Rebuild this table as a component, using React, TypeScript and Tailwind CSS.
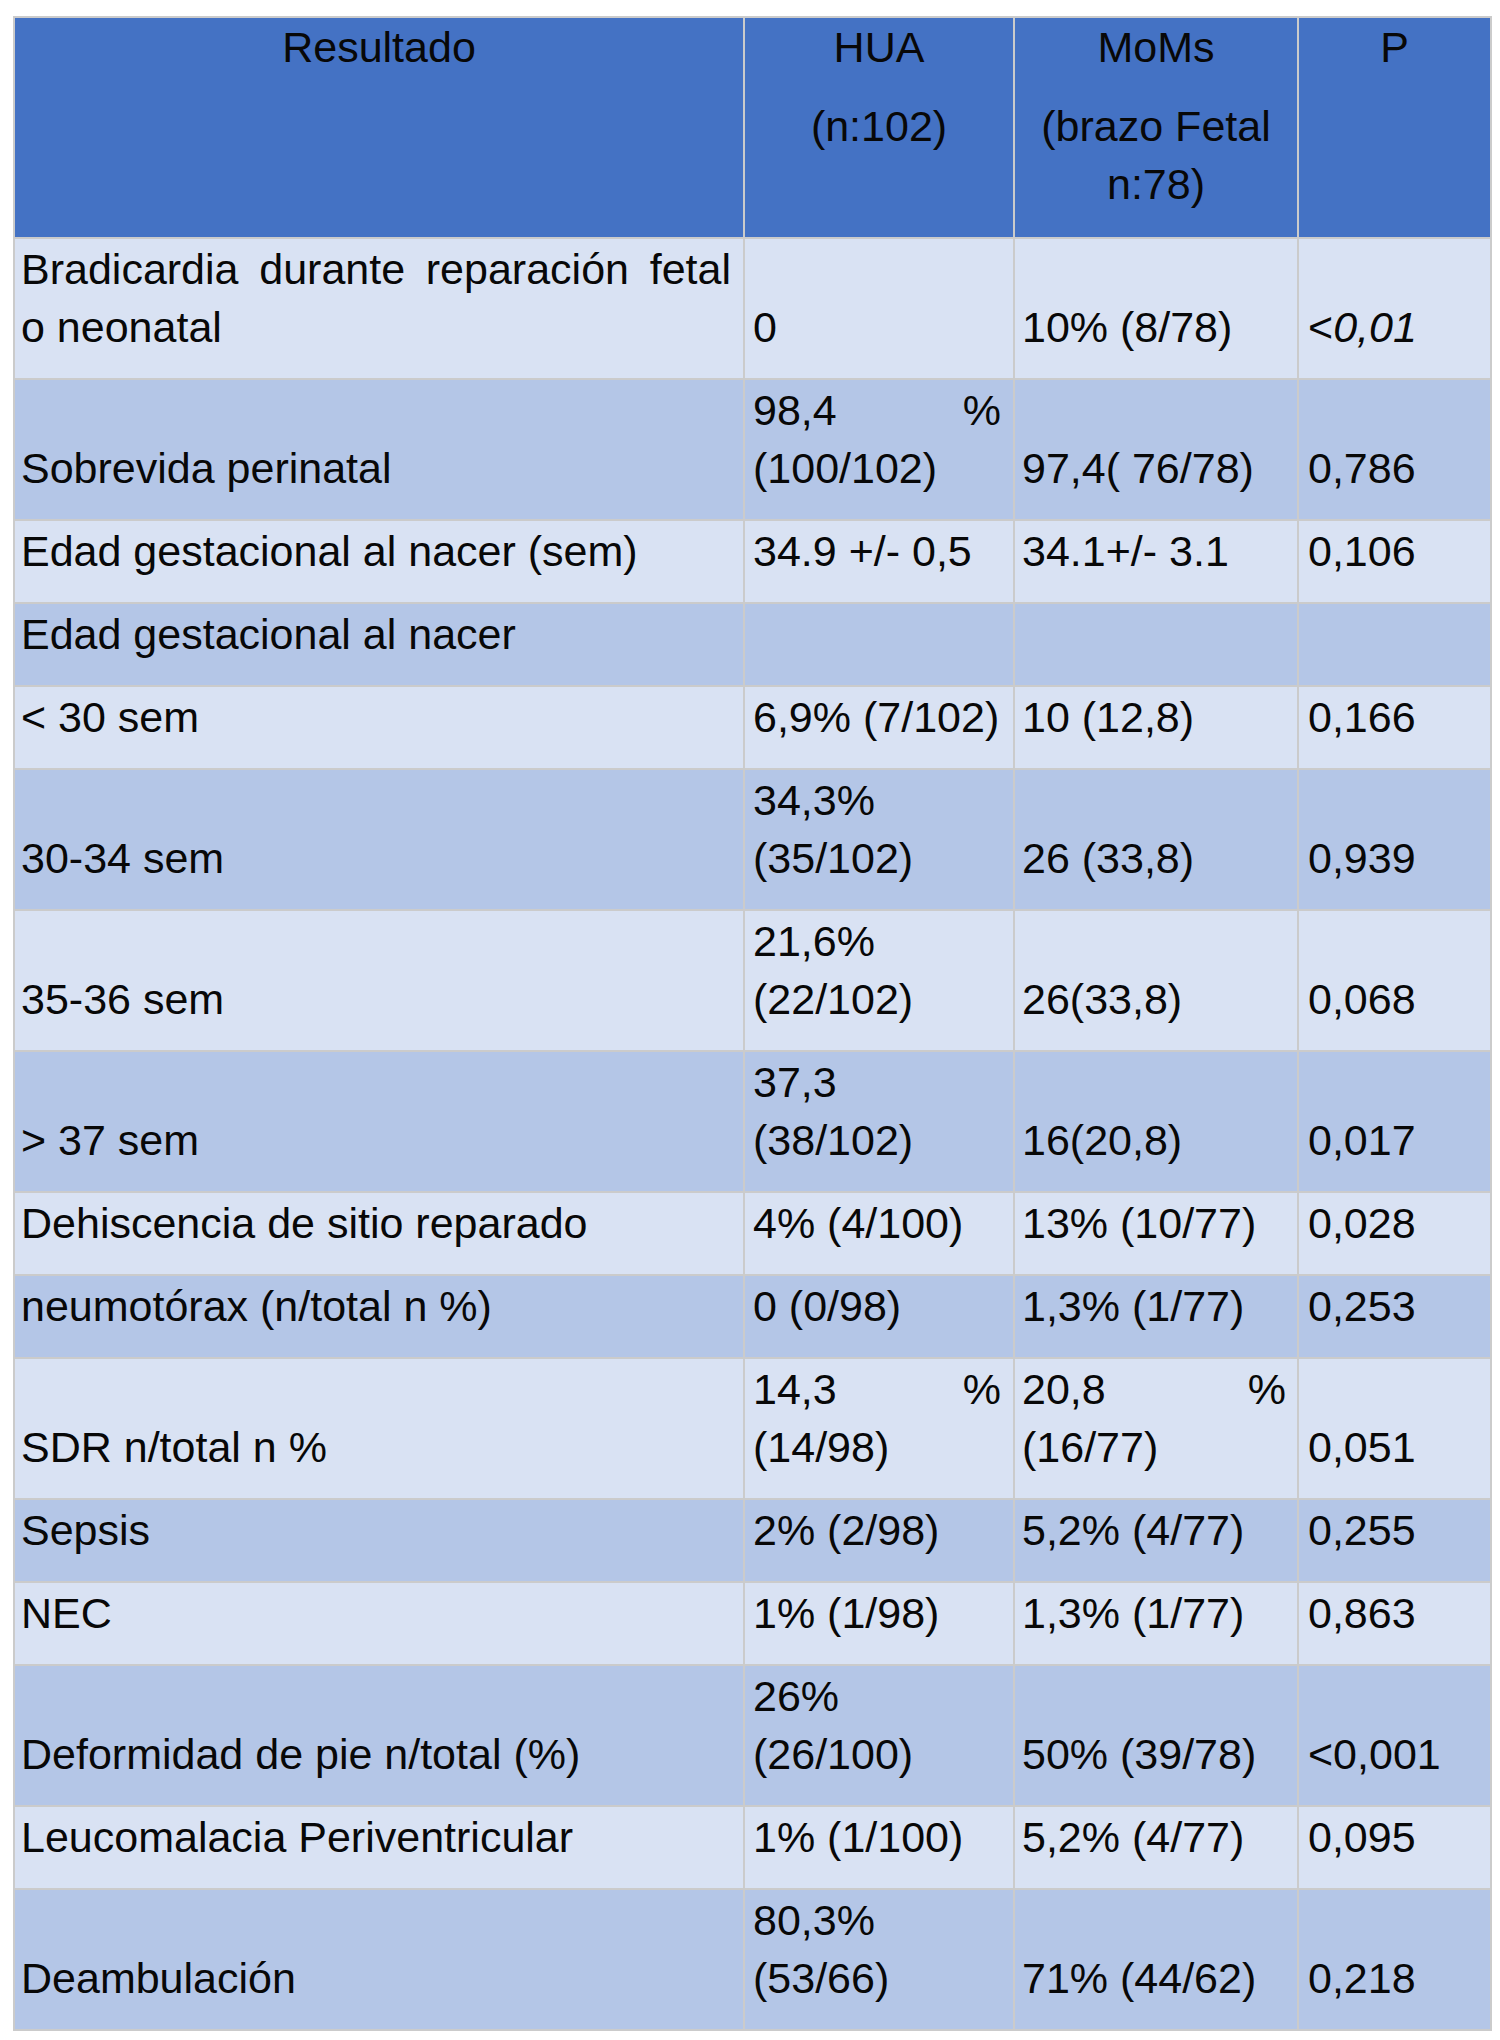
type Row = {
  label: string;
  hua: string;
  moms: string;
  p: React.ReactNode;
};

const rows: Row[] = [
  { label: "Bradicardia durante reparación fetal o neonatal", hua: "0", moms: "10% (8/78)", p: <>&lt;<i>0,01</i></> },
  { label: "Sobrevida perinatal", hua: "98,4 % (100/102)", moms: "97,4( 76/78)", p: "0,786" },
  { label: "Edad gestacional al nacer (sem)", hua: "34.9 +/- 0,5", moms: "34.1+/- 3.1", p: "0,106" },
  { label: "Edad gestacional al nacer", hua: "", moms: "", p: "" },
  { label: "< 30 sem", hua: "6,9% (7/102)", moms: "10 (12,8)", p: "0,166" },
  { label: "30-34 sem", hua: "34,3% (35/102)", moms: "26 (33,8)", p: "0,939" },
  { label: "35-36 sem", hua: "21,6% (22/102)", moms: "26(33,8)", p: "0,068" },
  { label: "> 37 sem", hua: "37,3 (38/102)", moms: "16(20,8)", p: "0,017" },
  { label: "Dehiscencia de sitio reparado", hua: "4% (4/100)", moms: "13% (10/77)", p: "0,028" },
  { label: "neumotórax (n/total n %)", hua: "0 (0/98)", moms: "1,3% (1/77)", p: "0,253" },
  { label: "SDR n/total n %", hua: "14,3 % (14/98)", moms: "20,8 % (16/77)", p: "0,051" },
  { label: "Sepsis", hua: "2% (2/98)", moms: "5,2% (4/77)", p: "0,255" },
  { label: "NEC", hua: "1% (1/98)", moms: "1,3% (1/77)", p: "0,863" },
  { label: "Deformidad de pie n/total (%)", hua: "26% (26/100)", moms: "50% (39/78)", p: "<0,001" },
  { label: "Leucomalacia Periventricular", hua: "1% (1/100)", moms: "5,2% (4/77)", p: "0,095" },
  { label: "Deambulación", hua: "80,3% (53/66)", moms: "71% (44/62)", p: "0,218" },
];

const App = () => {
  return (
    <div className="min-h-screen bg-white pl-[13px] pt-[16px] font-['Liberation_Sans',Arial,sans-serif] text-[43px] leading-[58px] text-[#080808]">
      <table className="w-[1477px] table-fixed border-collapse border-2 border-[#cbcbcb]">
        <colgroup>
          <col className="w-[730px]" />
          <col className="w-[270px]" />
          <col className="w-[284px]" />
          <col className="w-[193px]" />
        </colgroup>

        {/* Header */}
        <thead>
          <tr className="bg-[#4472c4]">
            <th className="border-2 border-[#cbcbcb] px-2 pt-0 pb-[24px] align-top text-center font-normal">
              <p>Resultado</p>
            </th>
            <th className="border-2 border-[#cbcbcb] px-2 pt-0 pb-[24px] align-top text-center font-normal">
              <p className="mb-[21px]">HUA</p>
              <p>(n:102)</p>
            </th>
            <th className="border-2 border-[#cbcbcb] px-2 pt-0 pb-[24px] align-top text-center font-normal">
              <p className="mb-[21px]">MoMs</p>
              <p>(brazo Fetal n:78)</p>
            </th>
            <th className="border-2 border-[#cbcbcb] px-2 pt-0 pb-[24px] align-top text-center font-normal">
              <p>P</p>
            </th>
          </tr>
        </thead>

        {/* Body */}
        <tbody>
          {rows.map((r, i) => (
            <tr key={i} className={i % 2 === 0 ? "bg-[#d9e2f3]" : "bg-[#b4c6e7]"}>
              <td className="border-2 border-[#cbcbcb] pl-[6px] pr-[12px] pt-[1px] pb-[22px] align-bottom text-justify">
                {r.label}
              </td>
              <td className="border-2 border-[#cbcbcb] pl-[8px] pr-[12px] pt-[1px] pb-[22px] align-bottom text-justify">
                {r.hua}
              </td>
              <td className="border-2 border-[#cbcbcb] pl-[7px] pr-[11px] pt-[1px] pb-[22px] align-bottom text-justify">
                {r.moms}
              </td>
              <td className="border-2 border-[#cbcbcb] pl-[9px] pr-[6px] pt-[1px] pb-[22px] align-bottom">
                {r.p}
              </td>
            </tr>
          ))}
        </tbody>
      </table>
    </div>
  );
};

export default App;
